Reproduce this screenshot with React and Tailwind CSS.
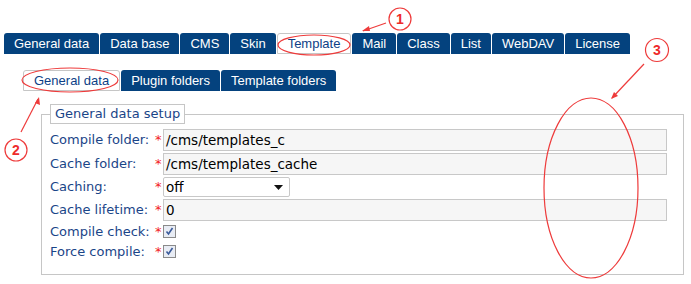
import React from "react";

const mainTabs = ["General data", "Data base", "CMS", "Skin", "Template", "Mail", "Class", "List", "WebDAV", "License"];
const subTabs = ["General data", "Plugin folders", "Template folders"];

const Tab = ({ label, active }) => (
  <div
    className={
      "h-[21px] px-[10px] flex items-center rounded-t-[3px] text-[13px] leading-none " +
      (active
        ? "bg-white border border-[#c6c6c6] text-[#0d3f86]"
        : "bg-[#04427e] text-white")
    }
  >
    {label}
  </div>
);

const Label = ({ text }) => (
  <div className="flex items-center w-[113px] shrink-0">
    <span className="w-[105px] text-[#1a4588]">{text}</span>
    <span className="text-[#f21b1b] text-[13px]">*</span>
  </div>
);

const TextRow = ({ label, value }) => (
  <div className="flex items-center h-[22px]">
    <Label text={label} />
    <div className="flex-1 h-[22px] border border-[#c8c8c8] bg-[#f6f6f6] px-[2px] flex items-center text-[13.5px] text-black">
      {value}
    </div>
  </div>
);

const CheckRow = ({ label }) => (
  <div className="flex items-center h-[19.5px]">
    <Label text={label} />
    <div className="w-[13px] h-[13px] border border-[#8a8a8a] bg-[#e8ecf4] flex items-center justify-center">
      <svg width="9" height="9" viewBox="0 0 9 9">
        <path d="M1.5 4.5 L3.5 7 L7.5 1" fill="none" stroke="#3a5a9a" strokeWidth="1.6" />
      </svg>
    </div>
  </div>
);

const Annotations = () => (
  <svg className="absolute inset-0 pointer-events-none" width="691" height="284">
    <g fill="none" stroke="#ee3b3b" strokeWidth="1.2">
      <ellipse cx="314" cy="45" rx="36" ry="10" />
      <ellipse cx="70" cy="80" rx="48" ry="12" />
      <ellipse cx="591" cy="188" rx="47" ry="90" />
      <circle cx="400" cy="19" r="11" fill="white" />
      <circle cx="16" cy="150" r="11" fill="white" />
      <circle cx="657" cy="50" r="11.5" fill="white" />
      <line x1="386" y1="23" x2="363" y2="31" />
      <line x1="21" y1="132" x2="38" y2="99" />
      <line x1="644" y1="64" x2="612" y2="98" />
    </g>
    <g fill="#ee3b3b">
      <polygon points="362,31 369,26 370,31" />
      <polygon points="39,97 40,105 35,103" />
      <polygon points="611,99 614,92 618,96" />
    </g>
    <g fill="#ee2b2b" fontFamily="Liberation Sans, Arial, sans-serif" fontWeight="bold" fontSize="14" textAnchor="middle">
      <text x="400" y="24">1</text>
      <text x="16" y="155">2</text>
      <text x="657" y="55">3</text>
    </g>
  </svg>
);

export default function App() {
  return (
    <div className="relative w-[691px] h-[284px] bg-white overflow-hidden font-['Liberation_Sans',Arial,sans-serif]">
      <div className="pt-[33px] pl-[4px] flex gap-px">
        {mainTabs.map((t) => (
          <Tab key={t} label={t} active={t === "Template"} />
        ))}
      </div>
      <div className="mt-[16px] pl-[23px] flex gap-px">
        {subTabs.map((t, i) => (
          <Tab key={t} label={t} active={i === 0} />
        ))}
      </div>
      <fieldset className="ml-[41px] mt-[13px] w-[643px] h-[171px] border border-[#c6c6c6] px-[8px] pt-[5px] font-['DejaVu_Sans',Verdana,sans-serif] text-[13px]">
        <legend className="h-[20px] px-[4px] border border-[#c6c6c6] bg-white text-[#1a4588] text-[13px] leading-[18px]">
          General data setup
        </legend>
        <div className="flex flex-col gap-[2px] pr-[8px]">
          <TextRow label="Compile folder:" value="/cms/templates_c" />
          <TextRow label="Cache folder:" value="/cms/templates_cache" />
          <div className="flex items-center h-[20px]">
            <Label text="Caching:" />
            <div className="w-[127px] h-[20px] border border-[#c8c8c8] rounded-[2px] bg-white pl-[2px] pr-[6px] flex items-center justify-between text-[13.5px] text-black">
              <span>off</span>
              <svg width="9" height="5" viewBox="0 0 9 5">
                <polygon points="0,0 9,0 4.5,5" fill="#111" />
              </svg>
            </div>
          </div>
          <TextRow label="Cache lifetime:" value="0" />
        </div>
        <div className="flex flex-col pt-[1px]">
          <CheckRow label="Compile check:" />
          <CheckRow label="Force compile:" />
        </div>
      </fieldset>
      <Annotations />
    </div>
  );
}
